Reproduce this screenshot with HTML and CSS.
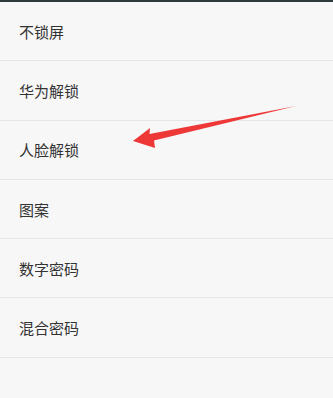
FILE: index.html
```html
<!DOCTYPE html>
<html lang="zh">
<head>
<meta charset="utf-8">
<link rel="stylesheet" href="styles.css">
</head>
<body>
<div class="page">
  <div class="topbar"></div>
  <ul class="list">
    <li class="row">不锁屏</li>
    <li class="row">华为解锁</li>
    <li class="row">人脸解锁</li>
    <li class="row">图案</li>
    <li class="row">数字密码</li>
    <li class="row">混合密码</li>
  </ul>
  <svg class="arrow" width="333" height="398" viewBox="0 0 333 398">
    <polygon points="133,141 150,128 149.5,134 296,106 154,140.5 155,148" fill="#ee3838"/>
  </svg>
</div>
</body>
</html>
```
FILE: styles.css
```css
html, body {
  margin: 0;
  padding: 0;
  background: #f7f7f7;
}
.page {
  position: relative;
  width: 333px;
  height: 398px;
  overflow: hidden;
  background: #f7f7f7;
  font-family: "Noto Sans CJK SC", "Noto Sans", sans-serif;
}
.topbar {
  height: 2px;
  background: #2e3b3c;
}
.list {
  list-style: none;
  margin: 0;
  padding: 0;
}
.row {
  height: 58.3px;
  border-bottom: 1px solid #e6e6e6;
  display: flex;
  align-items: center;
  padding-left: 19px;
  font-size: 15px;
  color: #333333;
  box-sizing: content-box;
}
.arrow {
  position: absolute;
  left: 0;
  top: 0;
}
```
